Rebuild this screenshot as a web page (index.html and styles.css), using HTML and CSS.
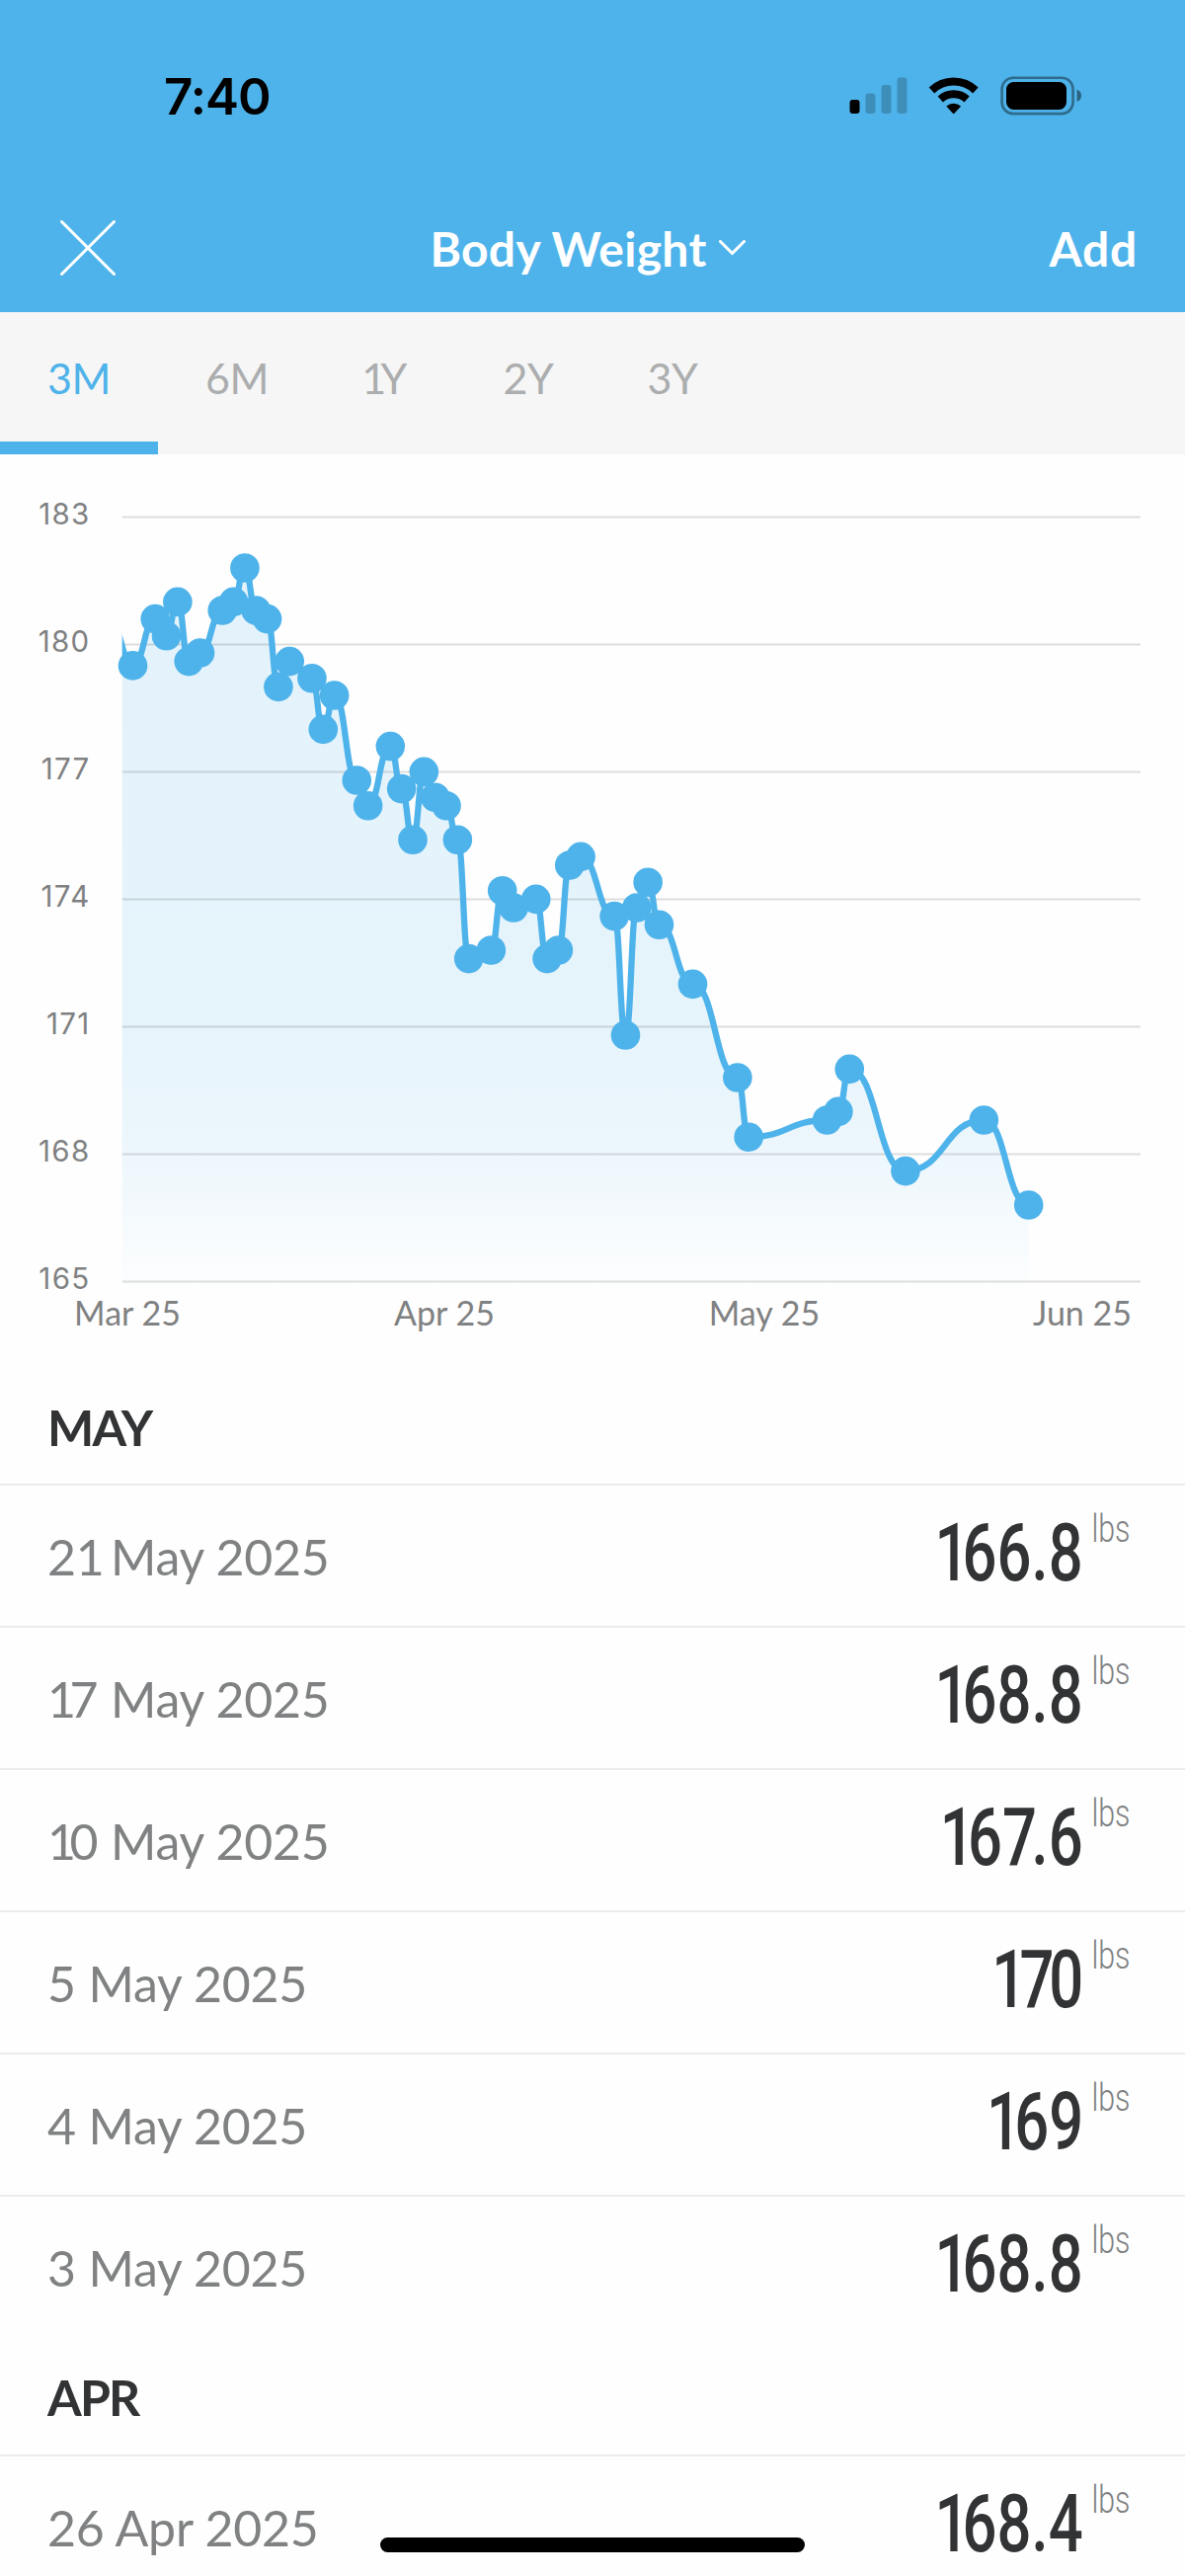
FILE: index.html
```
<!DOCTYPE html>
<html lang="en">
<head>
  <meta charset="UTF-8">
  <meta name="viewport" content="width=device-width, initial-scale=1.0">
  <title>Body Weight</title>
  <link rel="stylesheet" href="styles.css">
</head>
<body>
  <header class="header">
    <div class="status-bar">
      <div class="time">7:40</div>
      <svg class="status-icons" width="236" height="40" viewBox="0 0 236 40">
        <rect x="0.5" y="24" width="10" height="14" rx="3"/>
        <g opacity="0.2">
          <rect x="16.5" y="17.5" width="10" height="20.5" rx="3"/>
          <rect x="32.5" y="9" width="10" height="29" rx="3"/>
          <rect x="48.5" y="1.5" width="10" height="36.5" rx="3"/>
        </g>
        <g fill="none" stroke="#000" stroke-width="8">
          <path d="M83.5 14.5 A32 32 0 0 1 127.9 14.5"/>
          <path d="M92.3 23.5 A20 20 0 0 1 119.1 23.5"/>
        </g>
        <path d="M98.3 30.5 A11.5 11.5 0 0 1 113.1 30.5 L106.7 37.5 Q105.7 38.5 104.7 37.5 Z"/>
        <rect x="154.6" y="1.7" width="72" height="36.4" rx="11.5" fill="none" stroke="#000" stroke-width="2.6" opacity="0.4"/>
        <rect x="159" y="6" width="61" height="28" rx="7.5"/>
        <path d="M230.6 13.5 Q235 15.5 235 19.7 Q235 24 230.6 26 Z" opacity="0.45"/>
      </svg>
    </div>
    <div class="nav-bar">
      <svg class="close" width="56" height="56" viewBox="0 0 56 56">
        <path d="M1.5 1.5 L54.5 54.5 M54.5 1.5 L1.5 54.5"/>
      </svg>
      <div class="title">
        <h1>Body Weight</h1>
        <svg class="chevron" width="27" height="17" viewBox="0 0 27 17">
          <path d="M1.5 1.5 L13.5 13.5 L25.5 1.5"/>
        </svg>
      </div>
      <div class="add-btn">Add</div>
    </div>
  </header>

  <nav class="tabs">
    <div class="tab active">3M</div>
    <div class="tab">6M</div>
    <div class="tab year"><span class="one">1</span>Y</div>
    <div class="tab year">2Y</div>
    <div class="tab year">3Y</div>
  </nav>

  <svg class="chart" id="chart" width="1200" height="924" viewBox="0 460 1200 924"></svg>

  <section>
    <h2>MAY</h2>
    <div class="row"><div class="date">2<span class="one">1</span> May 2025</div><div class="weight"><span class="one">1</span>66.8</div><div class="unit">lbs</div></div>
    <div class="row"><div class="date"><span class="one">1</span>7 May 2025</div><div class="weight"><span class="one">1</span>68.8</div><div class="unit">lbs</div></div>
    <div class="row"><div class="date"><span class="one">1</span>0 May 2025</div><div class="weight"><span class="one">1</span>6<span class="seven">7</span>.6</div><div class="unit">lbs</div></div>
    <div class="row"><div class="date">5 May 2025</div><div class="weight"><span class="one">1</span><span class="seven">7</span>0</div><div class="unit">lbs</div></div>
    <div class="row"><div class="date">4 May 2025</div><div class="weight"><span class="one">1</span>69</div><div class="unit">lbs</div></div>
    <div class="row"><div class="date">3 May 2025</div><div class="weight"><span class="one">1</span>68.8</div><div class="unit">lbs</div></div>
  </section>
  <section>
    <h2>APR</h2>
    <div class="row"><div class="date">26 Apr 2025</div><div class="weight"><span class="one">1</span>68.4</div><div class="unit">lbs</div></div>
  </section>

  <div class="home-indicator"></div>

  <script src="chart.js"></script>
</body>
</html>
```
FILE: styles.css
```
* {
  box-sizing: border-box;
}
body {
  margin: 0;
  width: 1200px;
  height: 2608px;
  overflow: hidden;
  background: #fefefe;
  color: #323334;
  font-family: Lato, "Open Sans", sans-serif;
}
h1, h2 {
  margin: 0;
}
.header {
  height: 316px;
  background: #4eb3ea;
}
.status-bar {
  display: flex;
  justify-content: space-between;
  align-items: center;
  height: 188px;
  padding: 6px 104px 0 166px;
}
.time {
  font-family: Inter, sans-serif;
  font-size: 51px;
  font-weight: 600;
  letter-spacing: -1px;
  color: #000;
}
.nav-bar {
  display: grid;
  grid-template-columns: 1fr auto 1fr;
  align-items: center;
  height: 128px;
  padding: 0 48px 2px 42px;
  color: #fff;
}
.close {
  margin-left: 19px;
}
.close path, .chevron path {
  fill: none;
  stroke: #fff;
  stroke-width: 3;
  stroke-linecap: round;
}
.title {
  display: flex;
  align-items: center;
  gap: 12px;
  margin-right: 4px;
}
.title h1 {
  padding-top: 2px;
  font-size: 48px;
  line-height: 60px;
  letter-spacing: 0.3px;
}
.add-btn {
  justify-self: end;
  padding-top: 2px;
  font-size: 48px;
  font-weight: 700;
  line-height: 60px;
  letter-spacing: 0.7px;
}
.tabs {
  display: flex;
  height: 144px;
  background: #f6f6f6;
}
.tab {
  width: 160px;
  border-bottom: 13px solid transparent;
  text-align: center;
  font-size: 43px;
  line-height: 134px;
  letter-spacing: -0.5px;
  color: #abadae;
}
.tab.year {
  width: 146px;
  padding-right: 8px;
}
.tab.active {
  color: #4eb3ea;
  border-color: #4eb3ea;
}
.chart {
  display: block;
}
.grid-line {
  stroke: #000;
  stroke-opacity: 0.13;
  stroke-width: 2;
}
.y-label {
  font-family: Inter, sans-serif;
  font-size: 29.5px;
  letter-spacing: 1.3px;
  fill: #7f8182;
  text-anchor: end;
}
.x-label {
  font-size: 34px;
  fill: #7f8182;
  text-anchor: middle;
}
.line {
  fill: none;
  stroke: #4eb3ea;
  stroke-width: 6.3;
}
.dot {
  fill: #4eb3ea;
}
h2 {
  height: 119px;
  padding-left: 48px;
  font-size: 50px;
  line-height: 122px;
  font-weight: 700;
  letter-spacing: -1.8px;
}
.row {
  display: flex;
  height: 144px;
  padding: 0 54px 0 48px;
  border-top: 2px solid #ebecec;
}
/* the heading takes the extra pixel of the first rule */
section:first-of-type h2 {
  height: 118px;
}
.date {
  flex: 1;
  font-size: 50px;
  line-height: 144px;
  letter-spacing: -0.2px;
  color: #7f8182;
}
/* the 1 is as wide as the other figures here, so pull the next one in */
.one {
  letter-spacing: -0.13em;
}
/* Roboto narrowed down to the width of a condensed face */
.weight {
  font-family: Roboto, sans-serif;
  font-size: 81px;
  font-weight: 500;
  line-height: 138px;
  transform: translateX(2px) scaleX(0.76);
  transform-origin: right;
}
.weight .one {
  letter-spacing: -9px;
}
.seven {
  letter-spacing: -7px;
}
.unit {
  width: 51px;
  padding-left: 13px;
  font-family: Roboto, sans-serif;
  font-size: 38px;
  font-weight: 300;
  line-height: 89px;
  color: #7f8182;
  transform: scaleX(0.8);
  transform-origin: left;
}
.home-indicator {
  position: fixed;
  left: 385px;
  bottom: 24px;
  width: 430px;
  height: 15px;
  border-radius: 8px;
  background: #000;
}
```
FILE: chart.js
```
// [day, weight], day 0 is the first one inside the plot
const data = [
  [-2, 180.5], [0, 179.5], [2, 180.6], [3, 180.2], [4, 181], [5, 179.6], [6, 179.8],
  [8, 180.8], [9, 181], [10, 181.8], [11, 180.8], [12, 180.6], [13, 179], [14, 179.6],
  [16, 179.2], [17, 178], [18, 178.8], [20, 176.8], [21, 176.2], [23, 177.6],
  [24, 176.6], [25, 175.4], [26, 177], [27, 176.4], [28, 176.2], [29, 175.4],
  [30, 172.6], [32, 172.8], [33, 174.2], [34, 173.8], [36, 174], [37, 172.6],
  [38, 172.8], [39, 174.8], [40, 175], [43, 173.6], [44, 170.8], [45, 173.8],
  [46, 174.4], [47, 173.4], [50, 172], [54, 169.8], [55, 168.4], [62, 168.8],
  [63, 169], [64, 170], [69, 167.6], [76, 168.8], [80, 166.8]
];
const months = [['Mar 25', 129], ['Apr 25', 450], ['May 25', 774], ['Jun 25', 1096]];

const left = 123.7;
const right = 1155;
const x = day => 134.5 + day * 11.34;
const y = weight => 523.4 + (183 - weight) * 43;

let path = `M${x(data[0][0])} ${y(data[0][1])}`;
for (let i = 1; i < data.length; i++) {
  const [d0, w0] = data[i - 1];
  const [d1, w1] = data[i];
  const mid = (x(d0) + x(d1)) / 2;
  path += ` C${mid} ${y(w0)} ${mid} ${y(w1)} ${x(d1)} ${y(w1)}`;
}

let svg = `
  <defs>
    <linearGradient id="fade" gradientUnits="userSpaceOnUse" x1="0" y1="575" x2="0" y2="1312">
      <stop offset="0" stop-color="#4eb3ea" stop-opacity="0.15"/>
      <stop offset="0.6" stop-color="#4eb3ea" stop-opacity="0.14"/>
      <stop offset="0.8" stop-color="#4eb3ea" stop-opacity="0.1"/>
      <stop offset="1" stop-color="#4eb3ea" stop-opacity="0"/>
    </linearGradient>
    <clipPath id="plot"><rect x="${left}" y="500" width="${right - left}" height="820"/></clipPath>
  </defs>
  <path d="${path} V1312 H${x(-2)} Z" fill="url(#fade)" clip-path="url(#plot)"/>`;

for (let w = 183; w >= 165; w -= 3) {
  svg += `<line class="grid-line" x1="${left}" x2="${right}" y1="${y(w)}" y2="${y(w)}"/>`;
  svg += `<text class="y-label" x="91.5" y="${y(w) + 7.5}">${w}</text>`;
}
months.forEach(([name, cx]) => {
  svg += `<text class="x-label" x="${cx}" y="1341.5">${name}</text>`;
});

svg += `<path class="line" d="${path}" clip-path="url(#plot)"/>`;
data.slice(1).forEach(([d, w]) => {
  svg += `<circle class="dot" cx="${x(d)}" cy="${y(w)}" r="14.8"/>`;
});

document.getElementById('chart').innerHTML = svg;
```
